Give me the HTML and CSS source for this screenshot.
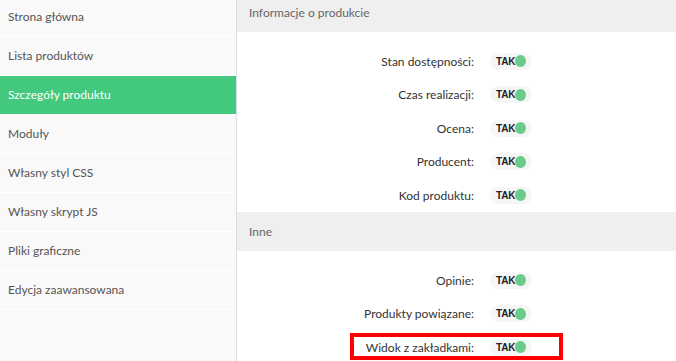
FILE: index.html
```html
<!DOCTYPE html>
<html lang="pl">
<head>
<meta charset="utf-8">
<title>Szczegóły produktu</title>
<link rel="stylesheet" href="styles.css">
</head>
<body>
<div class="app">
  <nav class="sidebar">
    <ul class="menu">
      <li class="menu-item">Strona główna</li>
      <li class="menu-item">Lista produktów</li>
      <li class="menu-item active">Szczegóły produktu</li>
      <li class="menu-item">Moduły</li>
      <li class="menu-item">Własny styl CSS</li>
      <li class="menu-item">Własny skrypt JS</li>
      <li class="menu-item">Pliki graficzne</li>
      <li class="menu-item">Edycja zaawansowana</li>
    </ul>
  </nav>
  <main class="content">
    <section class="group">
      <h2 class="group-title">Informacje o produkcie</h2>
      <div class="rows">
        <div class="row"><span class="label">Stan dostępności:</span><span class="toggle"><span class="toggle-text">TAK</span><span class="knob"></span></span></div>
        <div class="row"><span class="label">Czas realizacji:</span><span class="toggle"><span class="toggle-text">TAK</span><span class="knob"></span></span></div>
        <div class="row"><span class="label">Ocena:</span><span class="toggle"><span class="toggle-text">TAK</span><span class="knob"></span></span></div>
        <div class="row"><span class="label">Producent:</span><span class="toggle"><span class="toggle-text">TAK</span><span class="knob"></span></span></div>
        <div class="row"><span class="label">Kod produktu:</span><span class="toggle"><span class="toggle-text">TAK</span><span class="knob"></span></span></div>
      </div>
    </section>
    <section class="group">
      <h2 class="group-title">Inne</h2>
      <div class="rows">
        <div class="row"><span class="label">Opinie:</span><span class="toggle"><span class="toggle-text">TAK</span><span class="knob"></span></span></div>
        <div class="row"><span class="label">Produkty powiązane:</span><span class="toggle"><span class="toggle-text">TAK</span><span class="knob"></span></span></div>
        <div class="row marked"><span class="label">Widok z zakładkami:</span><span class="toggle"><span class="toggle-text">TAK</span><span class="knob"></span></span><span class="highlight"></span></div>
      </div>
    </section>
  </main>
</div>
</body>
</html>
```
FILE: styles.css
```css
html, body {
  margin: 0;
  padding: 0;
  height: 100%;
  overflow: hidden;
  background: #ffffff;
}

body {
  font-family: Lato, "Open Sans", "Noto Sans", sans-serif;
  font-size: 12px;
}

.app {
  display: flex;
  height: 361px;
}

.sidebar {
  width: 236px;
  flex: 0 0 236px;
  background: #f9f9f9;
  border-right: 1px solid #d5dde6;
  overflow: hidden;
}

.menu {
  list-style: none;
  margin: -2px 0 0 0;
  padding: 0;
}

.menu-item {
  height: 38px;
  line-height: 38px;
  padding-left: 8px;
  border-bottom: 1px solid #ffffff;
  color: #555555;
  font-size: 12px;
}

.menu-item.active {
  background: #42c97d;
  color: #ffffff;
}

.content {
  flex: 1;
  margin-top: -7px;
  overflow: hidden;
}

.group-title {
  margin: 0;
  height: 39px;
  line-height: 39px;
  padding-left: 12px;
  background: #efefef;
  color: #666666;
  font-size: 12px;
  font-weight: normal;
}

.rows {
  padding-top: 12.5px;
}

.row {
  position: relative;
  display: grid;
  grid-template-columns: 237px auto;
  column-gap: 16px;
  align-items: center;
  height: 33.5px;
}

.label {
  text-align: right;
  color: #333333;
  font-size: 12px;
}

.toggle {
  display: inline-flex;
  align-items: center;
  justify-self: start;
  width: 42px;
  height: 17px;
  box-sizing: border-box;
  padding: 0 6px;
  border-radius: 9px;
  background: #f6f6f6;
}

.toggle-text {
  font-family: "Liberation Sans", Arial, sans-serif;
  font-weight: bold;
  font-size: 10px;
  color: #222222;
  letter-spacing: -0.2px;
}

.knob {
  width: 12px;
  height: 12px;
  border-radius: 50%;
  background: #6acb8b;
  margin-left: auto;
}

.highlight {
  position: absolute;
  left: 113px;
  top: 2px;
  width: 213px;
  height: 27px;
  box-sizing: border-box;
  border: 4px solid #ff0000;
  pointer-events: none;
}
```
